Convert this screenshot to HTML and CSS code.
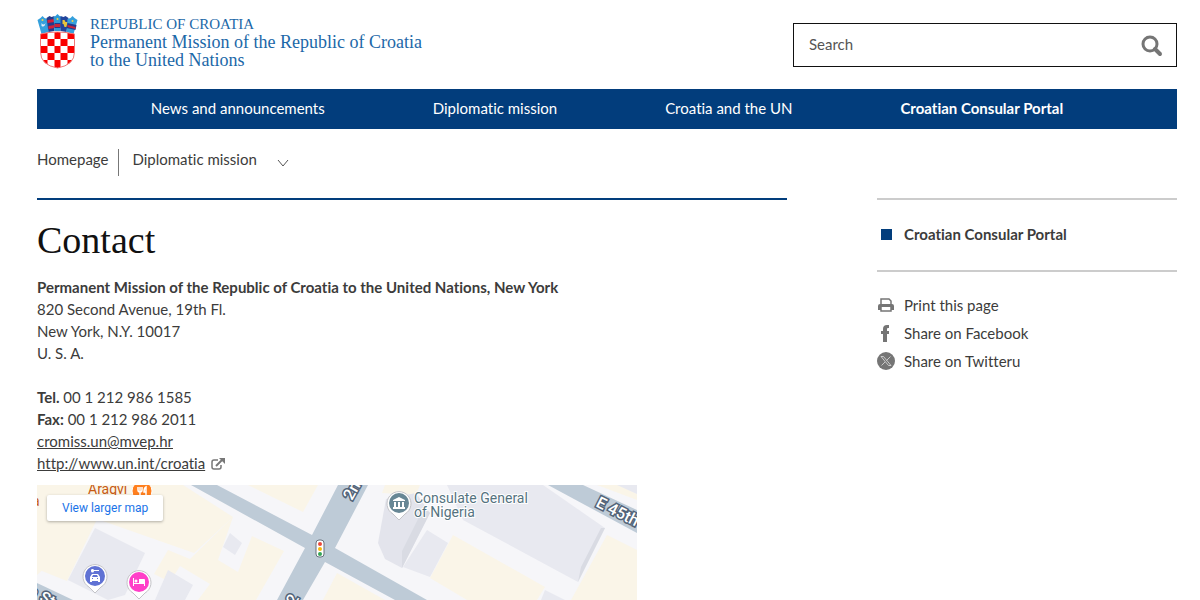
FILE: index.html
```html
<!DOCTYPE html>
<html lang="en">
<head>
    <meta charset="UTF-8">
    <meta name="viewport" content="width=device-width, initial-scale=1.0">
    <title>Contact</title>
    <link rel="stylesheet" href="styles.css">
</head>
<body>
    <div class="page">
        <header class="header">
            <a class="logo" href="#">
                <svg class="arms" viewBox="0 0 40 56" aria-hidden="true">
                    <!-- crown -->
                    <path d="M0 6l3-2 2-2 2 2 3 1 1 13-7 2z" fill="#35a0dc"/>
                    <path d="M9 4l3-2 2 1 3-1v15l-6 1z" fill="#243a8c"/>
                    <path d="M10 6l7-1v3l-7 1zM11 12l6-1v3l-6 1z" fill="#d5213a"/>
                    <path d="M16 3l2-1 2-2 2 2 2 1-1 14h-6z" fill="#2d9bd8"/>
                    <path d="M17 9h6v5h-6z" fill="#243a8c"/>
                    <path d="M17 10h6v3h-6z" fill="#c9273b"/>
                    <path d="M23 2l3 1 2-1 3 2-2 14-6-1z" fill="#22459c"/>
                    <path d="M25 6h2l1 2h2l-1 5h-2l-1-3h-1z" fill="#e8c33c"/>
                    <path d="M30 5l3-1 2-2 2 2 3 2-4 14-7-2z" fill="#35a0dc"/>
                    <path d="M30 9l9 2-1 5-9-2z" fill="#243a8c"/>
                    <path d="M30 11l8 2v2l-8-2z" fill="#c9273b"/>
                    <path d="M4 9q2 3 4 0-1 5-4 3z" fill="#e4eef8"/>
                    <circle cx="5" cy="6" r="1" fill="#f2d34c"/>
                    <circle cx="20" cy="5" r="1" fill="#f2d34c"/>
                    <circle cx="35" cy="7" r="1" fill="#f2d34c"/>
                    <!-- shield -->
                    <clipPath id="shield"><path d="M3 20q17-4 34 0v18q0 13-17 16Q3 51 3 38z"/></clipPath>
                    <g clip-path="url(#shield)">
                        <path d="M0 16h40v40H0z" fill="#fff"/>
                        <path d="M3 17h7v8H3zM17 17h6v8h-6zM30 17h7v8h-7zM10 25h7v7h-7zM23 25h7v7h-7zM3 32h7v7H3zM17 32h6v7h-6zM30 32h7v7h-7zM10 39h7v7h-7zM23 39h7v7h-7zM3 46h7v8H3zM17 46h6v9h-6zM30 46h7v8h-7z" fill="#fa0000"/>
                    </g>
                    <path d="M3 20q17-4 34 0v18q0 13-17 16Q3 51 3 38z" fill="none" stroke="#f07878"/>
                </svg>
                <span class="logo-text">
                    <span class="logo-country">REPUBLIC OF CROATIA</span>
                    <span>Permanent Mission of the Republic of Croatia</span>
                    <span>to the United Nations</span>
                </span>
            </a>
            <form class="search">
                <input type="text" placeholder="Search" aria-label="Search">
                <button type="submit" aria-label="Search">
                    <svg viewBox="0 0 22 22" width="22" height="22" fill="none" stroke="#757575">
                        <circle cx="9" cy="9" r="7" stroke-width="3"/>
                        <path d="M14 14l5 5" stroke-width="4" stroke-linecap="round"/>
                    </svg>
                </button>
            </form>
        </header>

        <nav class="main-nav">
            <a href="#">News and announcements</a>
            <a href="#">Diplomatic mission</a>
            <a href="#">Croatia and the UN</a>
            <a href="#" class="strong">Croatian Consular Portal</a>
        </nav>

        <div class="breadcrumb">
            <a href="#">Homepage</a>
            <a href="#" class="current">Diplomatic mission
                <svg viewBox="0 0 12 8" width="12" height="8" fill="none" stroke="#555"><path d="M1 1l5 6 5-6"/></svg>
            </a>
        </div>

        <div class="columns">
            <main class="content">
                <h1>Contact</h1>
                <p>
                    <strong>Permanent Mission of the Republic of Croatia to the United Nations, New York</strong><br>
                    820 Second Avenue, 19th Fl.<br>
                    New York, N.Y. 10017<br>
                    U. S. A.
                </p>
                <p>
                    <strong>Tel.</strong> 00 1 212 986 1585<br>
                    <strong>Fax:</strong> 00 1 212 986 2011<br>
                    <a href="mailto:cromiss.un@mvep.hr">cromiss.un@mvep.hr</a><br>
                    <a href="#">http://www.un.int/croatia</a>
                    <svg class="external" viewBox="0 0 14 12" width="14" height="12" fill="none" stroke="#777">
                        <path d="M7 2H3q-2 0-2 2v5q0 2 2 2h5q2 0 2-2V7" stroke-width="1.5"/>
                        <path d="M5 8l6-6" stroke-width="2"/>
                        <path d="M8 0h6v6z" fill="#777" stroke="none"/>
                    </svg>
                </p>

                <div class="map">
                    <svg viewBox="0 0 600 115">
                        <path d="M0 0h600v115H0z" fill="#f6f6f9"/>
                        <!-- blocks -->
                        <g fill="#faf5e8">
                            <path d="M0 0h146l50 32-39 36-97-34L0 90z"/>
                            <path d="M0 30h62L30 96 0 84z"/>
                            <path d="M196 32l-15 43 20 12 14-36 32 15-28 49h-58l12-16-30-18-10 16-16-8 14-24 22 9z"/>
                            <path d="M211 0h70l-15 27z"/>
                            <path d="M416 50l92 52-8 13h-70l-37-22z"/>
                            <path d="M570 50l30 15v50h-66z"/>
                            <path d="M300 88l48 27h-62z"/>
                            <path d="M348 0h35l-4 10-34-2z"/>
                            <path d="M560 0h22l18 9v6z"/>
                        </g>
                        <!-- buildings -->
                        <g fill="#e8e9f0">
                            <path d="M58 43l50 25-20 42-17 5-40-20z"/>
                            <path d="M193 48l12 10-7 12-12-8z"/>
                            <path d="M131 85l25 15-8 15h-30z"/>
                            <path d="M390 45l21 13-18 34-27-10z"/>
                            <path d="M410 0h96l62 43-27 54-115-62z"/>
                            <path d="M508 105l20 10h-24z"/>
                            <path d="M580 0h20v9z"/>
                        </g>
                        <path d="M349 14l30-6 14 20-28 55-17-9-7-16z" fill="#e3e4ec"/>
                        <path d="M393 28l-28 55v-17l22-44zM568 43l-27 54 3-15 20-39z" fill="#d9dbe3"/>
                        <!-- streets -->
                        <g fill="#becbd7">
                            <path d="M154 0h26l95 50 26-50h30l-33 63 92 52h-32l-70-38-22 38h-26l28-52z"/>
                            <path d="M511 0h35l54 25v23z"/>
                            <path d="M0 98l36 17H0z"/>
                        </g>
                        <g class="street-name">
                            <text x="315" y="16" transform="rotate(-61 315 16)">2nd Ave</text>
                            <text x="558" y="21" transform="rotate(27 558 21)">E 45th St</text>
                            <text x="-31" y="99" transform="rotate(27 -31 99)">44th St</text>
                            <text x="258" y="121" transform="rotate(-61 258 121)">2</text>
                        </g>
                        <!-- traffic light -->
                        <rect x="279" y="55" width="8" height="17" rx="3" fill="#fff" stroke="#68717d"/>
                        <circle cx="283" cy="59" r="2" fill="#ea4a3c"/>
                        <circle cx="283" cy="64" r="2" fill="#f8b90d"/>
                        <circle cx="283" cy="69" r="2" fill="#35a558"/>
                        <!-- restaurant -->
                        <text class="food" x="51" y="9">Aragvi</text>
                        <text class="food" x="-5" y="21">a</text>
                        <circle cx="105" cy="6" r="10" fill="#ff7f1e" stroke="#fff"/>
                        <path d="M101 2v3q0 2 2 2t2-2V2M103 2v9M109 11V2q-2 1-2 5h2" fill="none" stroke="#fff" stroke-width="1.5"/>
                        <!-- pins -->
                        <g fill="#fff" stroke="#c4c4c8">
                            <path d="M58 108l-6-6a12 12 0 1 1 12 0z"/>
                            <path d="M102 114l-6-6a12 12 0 1 1 12 0z"/>
                            <path d="M362 35l-6-6a12 12 0 1 1 12 0z"/>
                        </g>
                        <circle cx="58" cy="91" r="10" fill="#6072d4"/>
                        <circle cx="102" cy="97" r="10" fill="#ff3fc8"/>
                        <circle cx="362" cy="18" r="10" fill="#688795"/>
                        <path d="M55 89h6l2 3v5h-2v-1h-6v1h-2v-5zM54 86a1.500 1.500 0 0 1 3-1h5v1h-5a1.500 1.500 0 0 1-3 0z" fill="#fff"/>
                        <path d="M56 90h4l1 2h-6zM55 93h1v1h-1zM60 93h1v1h-1z" fill="#6072d4"/>
                        <path d="M96 93h1v5h5v-4h5q1 0 1 1v6h-1v-2H97v2h-1z" fill="#fff"/>
                        <circle cx="99" cy="96" r="1.500" fill="#fff"/>
                        <path d="M356 15l6-3 6 3v1h-12zM357 17h2v5h-2zM361 17h2v5h-2zM365 17h2v5h-2zM356 22h12v2h-12z" fill="#fff"/>
                        <g class="place">
                            <text x="377" y="18">Consulate General</text>
                            <text x="377" y="32">of Nigeria</text>
                        </g>
                    </svg>
                    <a class="larger-map" href="#">View larger map</a>
                </div>
            </main>

            <aside class="sidebar">
                <div class="portal">
                    <a href="#">Croatian Consular Portal</a>
                </div>
                <ul class="tools">
                    <li>
                        <a href="#">
                            <svg viewBox="0 0 18 18" width="18" height="18" fill="none" stroke="#757575">
                                <path d="M4 8V3h8l2 2v3" stroke-width="1.5"/>
                                <path d="M1 14v-4q0-2 2-2h12q2 0 2 2v4h-3v-3H4v3z" fill="#757575" stroke="none"/>
                                <path d="M4 11v4h10v-4" stroke-width="1.5"/>
                            </svg>
                            Print this page
                        </a>
                    </li>
                    <li>
                        <a href="#">
                            <svg viewBox="0 0 18 18" width="18" height="18">
                                <path d="M12 1v3h-1q-1 0-1 1v2h2v3h-2v8H6v-8H4V7h2V5q0-4 4-4z" fill="#757575"/>
                            </svg>
                            Share on Facebook
                        </a>
                    </li>
                    <li>
                        <a href="#">
                            <svg viewBox="0 0 18 18" width="18" height="18" fill="none" stroke="#ddd">
                                <circle cx="9" cy="9" r="9" fill="#757575" stroke="none"/>
                                <path d="M4 4.500h2.500l7.500 9h-2.500zM13.500 4.500l-4 4M8 10l-3.500 3.500" stroke-width=".8"/>
                            </svg>
                            Share on Twitteru
                        </a>
                    </li>
                </ul>
            </aside>
        </div>
    </div>
</body>
</html>
```
FILE: styles.css
```css
* {
    box-sizing: border-box;
}

body {
    margin: 0;
    background-color: #fff;
    color: #3c3c3b;
    font-family: Lato, "Liberation Sans", sans-serif;
    font-size: 15px;
    font-variant-ligatures: none;
    line-height: 22px;
}

a {
    color: inherit;
    text-decoration: none;
}

.page {
    padding: 14px 23px 0 37px;
}

.header {
    display: flex;
    justify-content: space-between;
    padding-bottom: 19px;
}

.logo {
    display: flex;
    gap: 12px;
    color: #1c68a8;
    font-family: "Liberation Serif", serif;
    font-size: 18px;
    line-height: 18px;
}

.arms {
    width: 41px;
    height: 56px;
}

.logo-text {
    display: flex;
    flex-direction: column;
    padding-top: 1px;
}

.logo-country {
    font-size: 15px;
}

.search {
    display: flex;
    align-items: center;
    width: 384px;
    height: 44px;
    margin-top: 9px;
    border: 1px solid #111;
}

.search input {
    flex: 1;
    min-width: 0;
    padding: 0 15px 2px;
    border: none;
    outline: none;
    background: none;
    font: inherit;
}

.search input::placeholder {
    color: #555;
    opacity: 1;
}

.search button {
    display: flex;
    padding: 2px 13px 0;
    border: none;
    background: none;
    cursor: pointer;
}

.main-nav {
    display: flex;
    justify-content: center;
    gap: 108px;
    padding: 8px 0 10px;
    background-color: #023d7c;
    color: #fff;
}

.main-nav .strong {
    font-weight: bold;
}

.breadcrumb {
    display: flex;
    padding: 20px 0 22px;
}

.breadcrumb a {
    height: 27px;
    line-height: 20px;
}

.breadcrumb .current {
    margin-left: 10px;
    padding-left: 13px;
    border-left: 1px solid #777;
}

.breadcrumb svg {
    margin-left: 16px;
    vertical-align: -2px;
}

.columns {
    display: flex;
    justify-content: space-between;
    gap: 90px;
}

.content {
    flex: 1;
    border-top: 2px solid #023d7c;
}

.content h1 {
    margin: 18px 0 14px;
    color: #111;
    font-family: "Liberation Serif", serif;
    font-size: 38px;
    font-weight: normal;
    line-height: 44px;
}

.content p {
    margin: 0 0 22px;
}

.content p a {
    text-decoration: underline;
}

.content .external {
    margin-left: 2px;
    vertical-align: -1px;
}

.content p:last-of-type {
    margin-bottom: 11px;
}

.map {
    position: relative;
    max-width: 600px;
    overflow: hidden;
}

.map svg {
    display: block;
    width: 100%;
}

.map text {
    font-family: Roboto, sans-serif;
    font-size: 14px;
}

.street-name {
    fill: #fff;
    stroke: #526378;
    stroke-width: 3px;
    paint-order: stroke;
}

.map .street-name text {
    font-size: 16px;
    font-weight: 500;
}

.food {
    fill: #c75a12;
}

.place {
    fill: #55737f;
    stroke: #fff;
    stroke-width: 2px;
    paint-order: stroke;
}

.larger-map {
    position: absolute;
    top: 10px;
    left: 10px;
    padding: 2px 15px;
    border-radius: 2px;
    background-color: #fff;
    box-shadow: 0 1px 3px rgba(0, 0, 0, 0.3);
    color: #1a73e8;
    font-family: Roboto, sans-serif;
    font-size: 12px;
}

.sidebar {
    width: 300px;
}

.portal {
    padding: 23px 0 25px;
    border-top: 2px solid #ccc;
    border-bottom: 2px solid #ccc;
}

.portal a {
    display: flex;
    align-items: center;
    gap: 12px;
    font-weight: bold;
}

.portal a::before {
    content: "";
    width: 11px;
    height: 11px;
    margin-left: 4px;
    background-color: #023d7c;
}

.tools {
    display: flex;
    flex-direction: column;
    gap: 6px;
    margin: 0;
    padding: 22px 0 0;
    list-style: none;
}

.tools a {
    display: flex;
    align-items: center;
    gap: 9px;
}
```
